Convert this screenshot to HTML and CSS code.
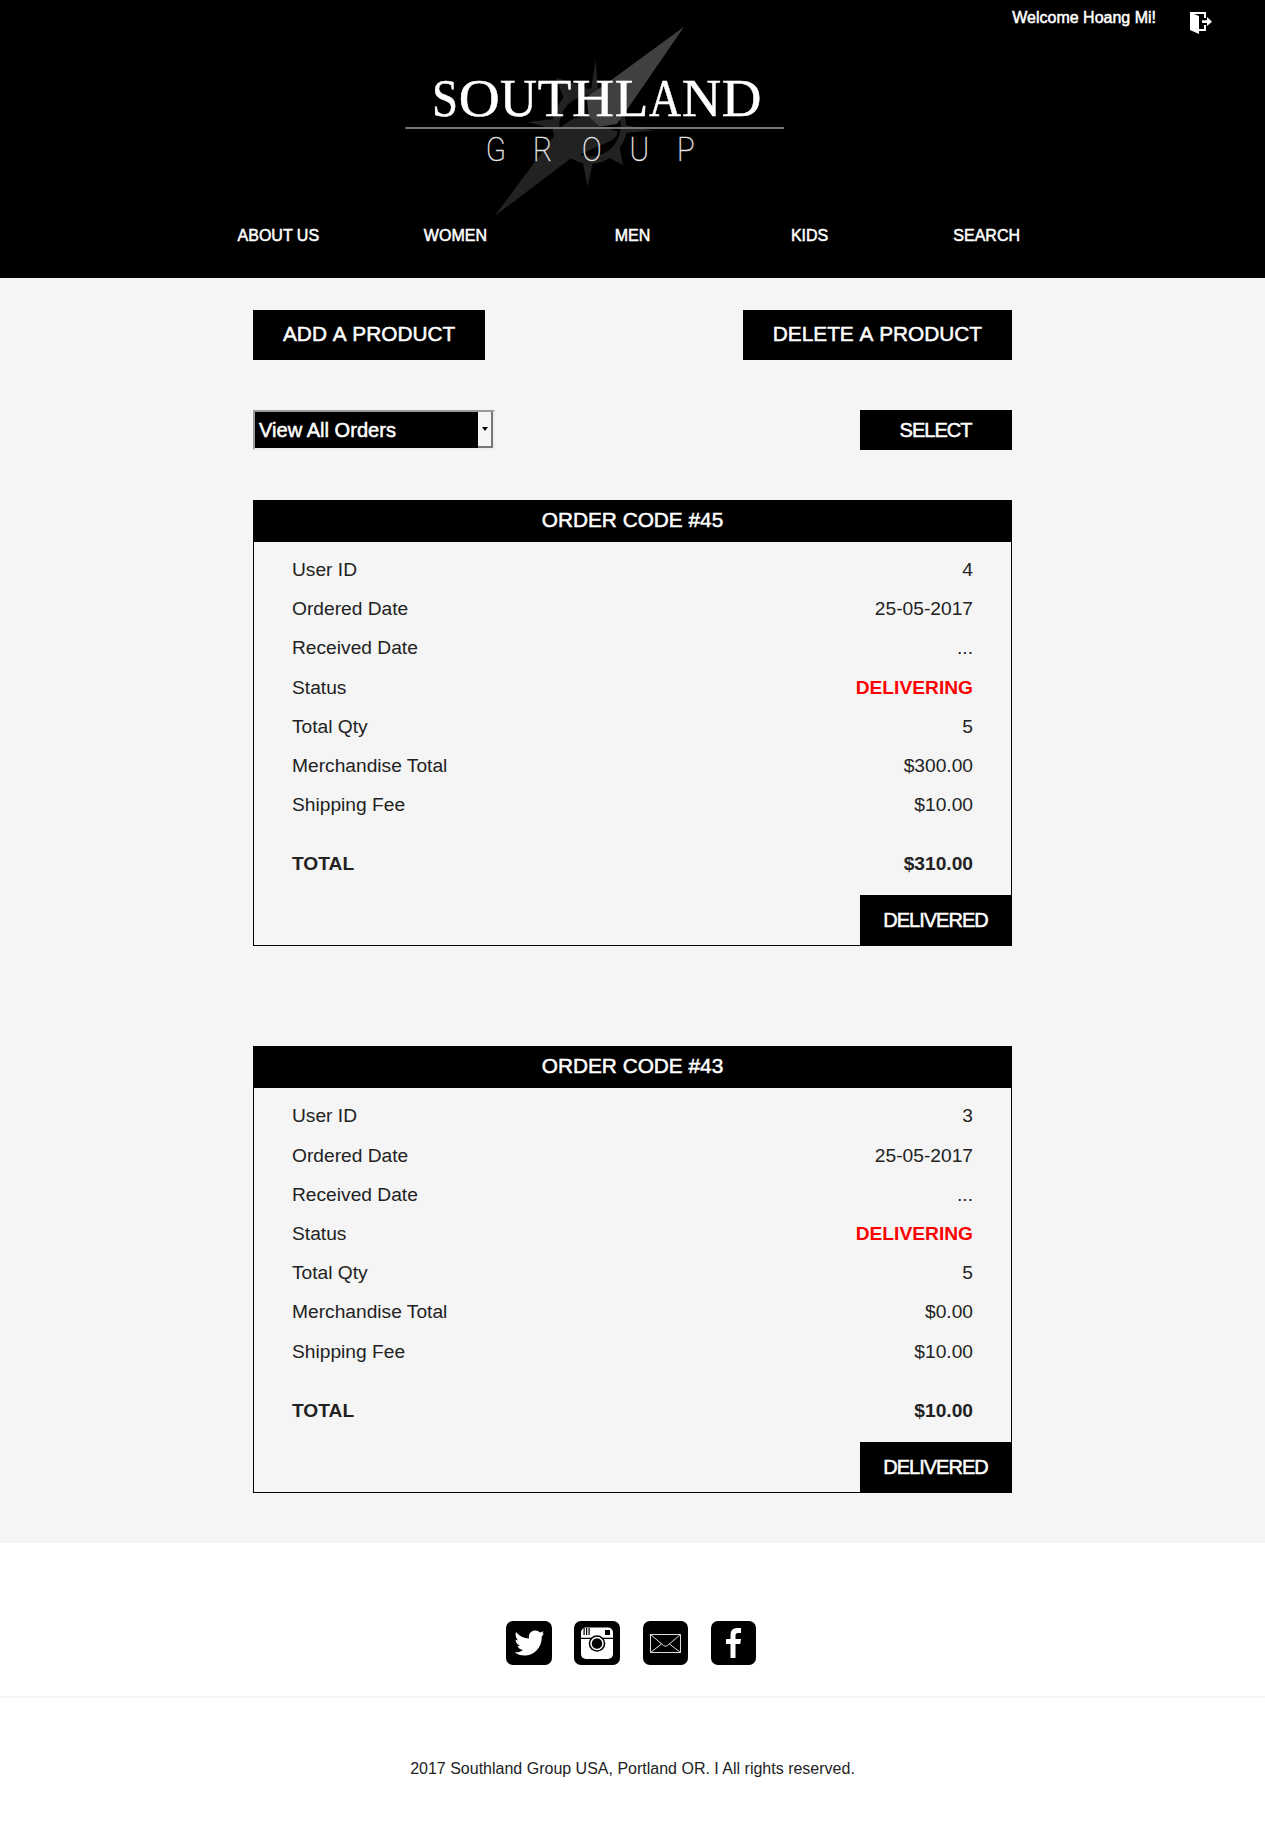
FILE: index.html
```html
<!DOCTYPE html>
<html lang="en">
<head>
<meta charset="utf-8">
<title>Southland Group - Orders</title>
<link rel="stylesheet" href="styles.css">
</head>
<body>
<header class="header">
  <div class="userbar">
    <span class="welcome">Welcome Hoang Mi!</span>
    <a class="logout" href="#" aria-label="Log out">
      <svg width="22" height="22" viewBox="0 0 22 22"><path d="M0 0H16V6H14V2H4L9 4V17H14V13H16V19H9V22L0 18Z" fill="#fff"/><path d="M12 8.3H17V5L22 9.7L17 14V11H12Z" fill="#fff"/></svg>
    </a>
  </div>
  <a class="logo" href="#" aria-label="Southland Group">
    <svg width="485" height="220" viewBox="0 0 1455 660">
      <path fill="#222" d="M617 147L604 235L590 237L576 228L499 203L520 263Q496 292 488 328L414 336L488 357Q493 391 515 416L545 446Q562 456 579 460L593 530L607 461Q636 459 659 444L699 465L689 414Q706 389 709 368L791 362L709 346Q706 304 681 274L624 241Z"/>
      <circle cx="600" cy="348" r="92" fill="#000"/>
      <path fill="#222" d="M313 619L512 352Q548 318 600 318L630 350L683 364Q682 385 655 396L540 447Z"/>
      <path fill="#404040" d="M882 50L664 210L590 262L596 320L630 350L681 341L712 298Z"/>
      <path fill="#777" d="M46 351H1182V357H46Z"/>
      <g class="logo-name">
        <text x="126" y="318" textLength="78" lengthAdjust="spacingAndGlyphs">S</text>
        <text x="206" y="318" textLength="123" lengthAdjust="spacingAndGlyphs">O</text>
        <text x="330" y="318" textLength="111" lengthAdjust="spacingAndGlyphs">U</text>
        <text x="443" y="318" textLength="101" lengthAdjust="spacingAndGlyphs">T</text>
        <text x="546" y="318" textLength="126" lengthAdjust="spacingAndGlyphs">H</text>
        <text x="674" y="318" textLength="101" lengthAdjust="spacingAndGlyphs">L</text>
        <text x="777" y="318" textLength="96" lengthAdjust="spacingAndGlyphs">A</text>
        <text x="875" y="318" textLength="118" lengthAdjust="spacingAndGlyphs">N</text>
        <text x="995" y="318" textLength="119" lengthAdjust="spacingAndGlyphs">D</text>
      </g>
      <g transform="scale(.9 1)"><text class="logo-sub" x="319 477 640 798 957" y="452">GROUP</text></g>
    </svg>
  </a>
  <nav class="nav">
    <a href="#">ABOUT US</a><a href="#">WOMEN</a><a href="#">MEN</a><a href="#">KIDS</a><a href="#">SEARCH</a>
  </nav>
</header>

<main class="main">
  <div class="bar">
    <a class="product-btn" href="#">ADD A PRODUCT</a>
    <a class="product-btn" href="#">DELETE A PRODUCT</a>
  </div>
  <div class="bar filter">
    <div class="dropdown" role="combobox"><span class="dropdown-value">View All Orders</span><span class="dropdown-arrow"></span></div>
    <button class="select-btn">SELECT</button>
  </div>

  <section class="order">
    <h2 class="order-title">ORDER CODE #45</h2>
    <dl class="rows">
      <div class="row"><dt>User ID</dt><dd>4</dd></div>
      <div class="row"><dt>Ordered Date</dt><dd>25-05-2017</dd></div>
      <div class="row"><dt>Received Date</dt><dd>...</dd></div>
      <div class="row"><dt>Status</dt><dd class="status">DELIVERING</dd></div>
      <div class="row"><dt>Total Qty</dt><dd>5</dd></div>
      <div class="row"><dt>Merchandise Total</dt><dd>$300.00</dd></div>
      <div class="row"><dt>Shipping Fee</dt><dd>$10.00</dd></div>
      <div class="row total"><dt>TOTAL</dt><dd>$310.00</dd></div>
    </dl>
    <button class="delivered-btn">DELIVERED</button>
  </section>

  <section class="order">
    <h2 class="order-title">ORDER CODE #43</h2>
    <dl class="rows">
      <div class="row"><dt>User ID</dt><dd>3</dd></div>
      <div class="row"><dt>Ordered Date</dt><dd>25-05-2017</dd></div>
      <div class="row"><dt>Received Date</dt><dd>...</dd></div>
      <div class="row"><dt>Status</dt><dd class="status">DELIVERING</dd></div>
      <div class="row"><dt>Total Qty</dt><dd>5</dd></div>
      <div class="row"><dt>Merchandise Total</dt><dd>$0.00</dd></div>
      <div class="row"><dt>Shipping Fee</dt><dd>$10.00</dd></div>
      <div class="row total"><dt>TOTAL</dt><dd>$10.00</dd></div>
    </dl>
    <button class="delivered-btn">DELIVERED</button>
  </section>
</main>

<footer class="footer">
  <div class="social">
    <a href="#" aria-label="Twitter"><svg width="46" height="44" viewBox="0 0 46 44"><rect width="46" height="44" rx="7"/><path fill="#fff" d="M10 11Q15 17 23 17.500C22 12 26 9.500 29.500 9.500Q32 9.500 34 11.500L37.500 10.300L36.300 12.800L38 12.500L35.800 15.500C36 27 28 34.500 18.500 34.500Q13 34.500 8.500 31.500Q14 31.500 17 29Q13 28.500 11.500 25H14Q10 23 9.500 18.800L12 19.500Q8.500 15.500 10 11Z"/></svg></a>
    <a href="#" aria-label="Instagram"><svg width="46" height="44" viewBox="0 0 46 44"><rect width="46" height="44" rx="7"/><rect x="7" y="6.500" width="32" height="31.500" rx="5" fill="#fff"/><path d="M7 16.700H39V18H7ZM9.500 7H10.700V14H9.500ZM12 7H13.200V14H12ZM14.500 7H15.700V14H14.500ZM31 9H36V14H31Z"/><circle cx="23" cy="22.500" r="8.300"/><circle cx="23" cy="22.500" r="6" fill="none" stroke="#fff" stroke-width="1.500"/></svg></a>
    <a href="#" aria-label="Email"><svg width="46" height="44" viewBox="0 0 46 44"><rect width="45" height="44" rx="7"/><path fill="none" stroke="#ddd" d="M7.500 13.500H37.500V31.500H7.500ZM7.500 13.500L20.500 24.500Q22.500 26 24.500 24.500L37.500 13.500M7.500 31.500L18.500 23M37.500 31.500L26.500 23"/></svg></a>
    <a href="#" aria-label="Facebook"><svg width="46" height="44" viewBox="0 0 46 44"><rect width="45" height="44" rx="7"/><path fill="#fff" d="M19.500 37V23H15V18H19.500V14Q19.500 7 26 7H30V12H27Q24.500 12 24.500 14.500V18H30L29.300 23H24.500V37Z"/></svg></a>
  </div>
  <p class="copyright">2017 Southland Group USA, Portland OR. I All rights reserved.</p>
</footer>
</body>
</html>
```
FILE: styles.css
```css
* { box-sizing: border-box; }
body {
  margin: 0;
  background: #fff;
  color: #222;
  font: 16px "Liberation Sans", Arial, sans-serif;
}
a { color: inherit; text-decoration: none; }
button { border: 0; margin: 0; padding: 0; font: inherit; }

.header {
  display: flex;
  flex-direction: column;
  height: 278px;
  background: #000;
  color: #fff;
  -webkit-text-stroke: .5px #fff;
}
.userbar {
  display: flex;
  justify-content: flex-end;
  gap: 34px;
  height: 34px;
  padding: 8px 53px 0 0;
  margin-bottom: -24px;
}
.welcome { line-height: 20px; }
.logout { padding-top: 4px; height: 26px; }
.logout svg, .logo svg, .social svg { display: block; }
.logo { align-self: center; -webkit-text-stroke: 0; }
.logo-name { font: 160px "Liberation Serif", serif; fill: #fff; stroke: #fff; stroke-width: 1.5px; }
.logo-sub { font: 100 98px Roboto, sans-serif; fill: #eee; stroke: #ddd; stroke-width: 1.5px; }
.nav {
  display: grid;
  grid-template-columns: repeat(5, 1fr);
  width: 70%;
  margin: -5px auto 0;
  text-align: center;
  line-height: 21px;
}

.main {
  height: 1265px;
  padding: 32px 20% 0;
  background: #f5f5f5;
}
.bar { display: flex; justify-content: space-between; }
.product-btn {
  height: 50px;
  padding: 0 30px;
  background: #000;
  color: #fff;
  font-size: 20.8px;
  font-kerning: none;
  line-height: 47px;
  -webkit-text-stroke: .5px #fff;
}
.filter { margin: 50px 0; }
.dropdown {
  display: flex;
  width: 242px;
  height: 40px;
  border: 2px solid;
  border-color: #999 #eee #eee #999;
}
.dropdown-value {
  flex: 1;
  padding: 1px 0 0 4px;
  background: #000;
  color: #fff;
  font-size: 20.1px;
  line-height: 34px;
  -webkit-text-stroke: .5px #fff;
}
.dropdown-arrow {
  display: flex;
  justify-content: center;
  align-items: center;
  width: 15px;
  border: solid #777;
  border-width: 0 2px 2px 0;
}
.dropdown-arrow::before {
  content: "";
  border: 3px solid transparent;
  border-top: 4px solid #000;
  border-bottom: 0;
}
.select-btn, .delivered-btn {
  width: 152px;
  padding-right: 1px;
  background: #000;
  color: #fff;
  font-size: 20px;
  letter-spacing: -1px;
  -webkit-text-stroke: .5px #fff;
}
.select-btn { height: 40px; padding-top: 1px; }

.order {
  display: flex;
  flex-direction: column;
  height: 446.2px;
  margin-bottom: 100.2px;
  border: 1px solid #000;
}
.order-title {
  height: 41px;
  margin: 0;
  background: #000;
  color: #fff;
  font-size: 20.8px;
  font-weight: 400;
  line-height: 37.5px;
  text-align: center;
  -webkit-text-stroke: .5px #fff;
}
.rows { margin: 0; padding: 8px 38px 0; font-size: 19.2px; line-height: 39.2px; }
.row { display: flex; justify-content: space-between; }
.row dd { margin: 0; }
.row .status { color: #f00; font-weight: 700; }
.total { margin-top: 20px; font-weight: 700; }
.delivered-btn { align-self: flex-end; height: 50px; margin: auto -1px 0 0; padding-top: 1px; }

.footer { height: 297px; padding-top: 78px; }
.social {
  display: flex;
  justify-content: center;
  gap: 22.4px;
  height: 75px;
  padding-right: 2px;
}
.copyright {
  margin: 0;
  padding-top: 60px;
  border-top: 2px solid #f5f5f5;
  text-align: center;
  line-height: 21px;
}
```
